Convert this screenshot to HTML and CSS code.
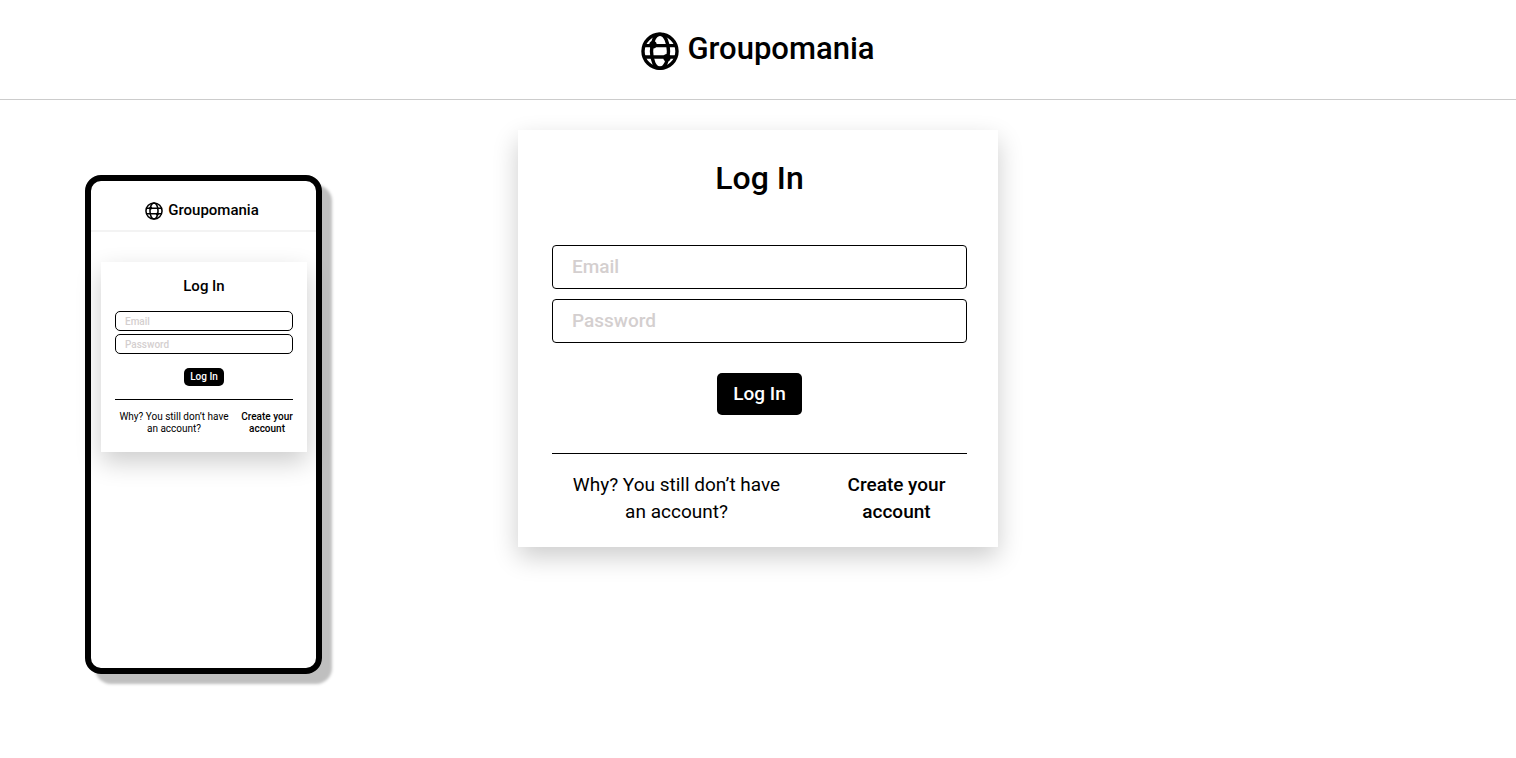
FILE: index.html
```html
<!DOCTYPE html>
<html lang="en">
<head>
<meta charset="utf-8">
<meta name="viewport" content="width=device-width, initial-scale=1">
<title>Groupomania</title>
<link rel="stylesheet" href="styles.css">
</head>
<body>
<header class="header">
  <svg class="logo" viewBox="0 0 38 38" aria-hidden="true">
    <g fill="none" stroke="currentColor" stroke-width="3.400">
      <circle cx="19" cy="19.300" r="17"/>
      <path d="M19 2.300C14 2.300 10.500 10 10.500 19.300S14 36.300 19 36.300S27.500 28 27.500 19.300S24 2.300 19 2.300Z"/>
      <path d="M3 13.600h32M3 25h32"/>
    </g>
    <circle cx="12" cy="12.800" r="3.700"/>
    <circle cx="26" cy="25.800" r="3.700"/>
  </svg>
  <span class="brand">Groupomania</span>
</header>
<main class="stage">
  <section class="phone" aria-label="Mobile preview">
    <div class="header">
      <svg class="logo" viewBox="0 0 38 38" aria-hidden="true">
        <g fill="none" stroke="currentColor" stroke-width="3.200">
          <circle cx="19" cy="19" r="17"/>
          <path d="M19 2C14 2 10.500 10 10.500 19S14 36 19 36S27.500 28 27.500 19S24 2 19 2Z"/>
          <path d="M3 13.300h32M3 24.700h32"/>
        </g>
        <circle cx="12" cy="12.500" r="3.200"/>
        <circle cx="26" cy="25.500" r="3.200"/>
      </svg>
      <span class="brand">Groupomania</span>
    </div>
    <form class="card">
      <h2 class="title">Log In</h2>
      <div class="fields">
        <input class="field" type="email" placeholder="Email" aria-label="Email">
        <input class="field" type="password" placeholder="Password" aria-label="Password">
      </div>
      <button class="submit" type="button">Log In</button>
      <div class="signup">
        <p class="question">Why? You still don’t have an account?</p>
        <a class="create" href="#">Create your account</a>
      </div>
    </form>
  </section>
  <form class="card">
    <h1 class="title">Log In</h1>
    <div class="fields">
      <input class="field" type="email" placeholder="Email" aria-label="Email">
      <input class="field" type="password" placeholder="Password" aria-label="Password">
    </div>
    <button class="submit" type="button">Log In</button>
    <div class="signup">
      <p class="question">Why? You still don’t have an account?</p>
      <a class="create" href="#">Create your account</a>
    </div>
  </form>
</main>
</body>
</html>
```
FILE: styles.css
```css
* {
  box-sizing: border-box;
}

body {
  margin: 0;
  background: #fff;
  color: #000;
  font-family: Roboto, sans-serif;
}

.header {
  display: flex;
  justify-content: center;
  align-items: center;
  gap: 8px;
  padding: 28px 0 29px;
  border-bottom: 1px solid #ccc;
}

.logo {
  width: 38px;
  height: 38px;
  margin-top: 4px;
}

.brand {
  font-size: 31px;
  line-height: 40px;
  font-weight: 500;
}

.stage {
  display: grid;
  grid-template-columns: minmax(322px, 1fr) 480px minmax(0, 1fr);
  align-items: start;
  padding: 30px 0 40px;
}

.card {
  display: flex;
  flex-direction: column;
  align-items: center;
  padding: 28px 31px 22px 34px;
  background: #fff;
  box-shadow: 0 10px 24px rgba(0, 0, 0, 0.2);
}

.title {
  margin: 0;
  font-size: 32px;
  line-height: 40px;
  font-weight: 500;
}

.fields {
  display: flex;
  flex-direction: column;
  align-self: stretch;
  gap: 10px;
  margin: 47px 0 30px;
}

.field {
  width: 100%;
  height: 44px;
  padding: 0 19px 2px;
  border: 1px solid #000;
  border-radius: 4px;
  background: #fff;
  font: 500 19px Roboto, sans-serif;
}

.field::placeholder {
  color: #d4cfcf;
  opacity: 1;
}

.submit {
  padding: 0 16px;
  border: 0;
  border-radius: 5px;
  background: #000;
  color: #fff;
  font: 500 19px/42px Roboto, sans-serif;
}

.signup {
  display: grid;
  grid-template-columns: 60% 34%;
  justify-content: space-between;
  align-self: stretch;
  margin-top: 38px;
  padding-top: 17px;
  border-top: 1px solid #000;
  font-size: 19px;
  line-height: 27px;
  text-align: center;
}

.question {
  margin: 0;
  padding: 0 16px;
}

.create {
  padding: 0 16px;
  color: inherit;
  font-weight: 500;
  text-decoration: none;
}

.phone {
  width: 237px;
  min-height: 499px;
  margin: 45px 0 0 85px;
  border: 6px solid #000;
  border-radius: 16px;
  box-shadow: 10px 10px 3px rgba(0, 0, 0, 0.25);
}

.phone .header {
  gap: 5px;
  padding: 19px 3px 10px 0;
  border-bottom: 2px solid #f3f3f3;
}

.phone .logo {
  width: 18px;
  height: 18px;
  margin-top: 1px;
}

.phone .brand {
  font-size: 15px;
  line-height: 20px;
}

.phone .card {
  margin: 30px 9px 0 10px;
  padding: 14px 14px 17px;
}

.phone .title {
  font-size: 15px;
  line-height: 20px;
}

.phone .fields {
  gap: 3px;
  margin: 15px 0 14px;
}

.phone .field {
  height: 20px;
  padding: 0 9px;
  border-radius: 5px;
  font-size: 10px;
}

.phone .submit {
  padding: 0 6px;
  font-size: 10px;
  line-height: 18px;
}

.phone .signup {
  grid-template-columns: 118px 52px;
  margin-top: 13px;
  padding-top: 11px;
  font-size: 10px;
  line-height: 12px;
}

.phone .question,
.phone .create {
  padding: 0;
}
```
